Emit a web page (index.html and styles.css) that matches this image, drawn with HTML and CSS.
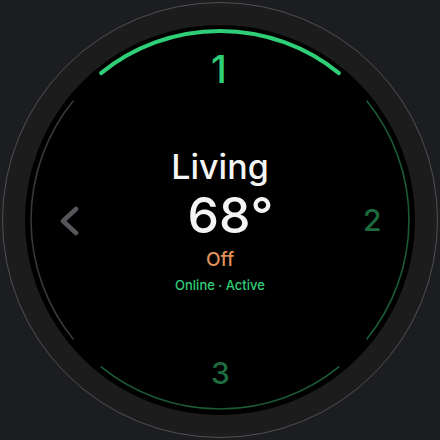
FILE: index.html
```html
<!DOCTYPE html>
<html>
<head>
<meta charset="utf-8">
<link rel="stylesheet" href="styles.css">
</head>
<body>
<div class="stage">
  <div class="bezel">
    <div class="face">
      <svg class="arcs" viewBox="0 0 440 440" width="440" height="440">
        <path class="arc arc-active" d="M101.1 73.1 A189 189 0 0 1 338.9 73.1"/>
        <path class="arc arc-green" d="M366.9 101.1 A189 189 0 0 1 366.9 338.9"/>
        <path class="arc arc-green" d="M338.9 366.9 A189 189 0 0 1 101.1 366.9"/>
        <path class="arc arc-grey" d="M73.1 338.9 A189 189 0 0 1 73.1 101.1"/>
      </svg>
      <span class="num num-1">1</span>
      <span class="num num-2">2</span>
      <span class="num num-3">3</span>
      <svg class="chev" viewBox="0 0 24 34" width="24" height="34">
        <path d="M17 3 L4 15 L17 27"/>
      </svg>
      <div class="info">
        <div class="room">Living</div>
        <div class="temp">68<span class="deg">°</span></div>
        <div class="mode">Off</div>
        <div class="status">Online · Active</div>
      </div>
    </div>
  </div>
</div>
</body>
</html>
```
FILE: styles.css
```css
html, body {
  margin: 0;
  padding: 0;
  background: #1c1d21;
  font-family: Inter, "Noto Sans", sans-serif;
}
.stage {
  width: 440px;
  height: 440px;
  display: flex;
  align-items: center;
  justify-content: center;
}
.bezel {
  width: 434px;
  height: 434px;
  border-radius: 50%;
  border: 1px solid #505052;
  background: #1c1c1d;
  display: flex;
  align-items: center;
  justify-content: center;
}
.face {
  position: relative;
  width: 390px;
  height: 390px;
  border-radius: 50%;
  background: #000;
  display: flex;
  align-items: center;
  justify-content: center;
}
.arcs {
  position: absolute;
  left: -25px;
  top: -25px;
}
.arc {
  fill: none;
  stroke-linecap: round;
}
.arc-active {
  stroke: #2fcf78;
  stroke-width: 4;
}
.arc-green {
  stroke: #1b5a34;
  stroke-width: 1.6;
}
.arc-grey {
  stroke: #38383a;
  stroke-width: 1.6;
}
.num {
  position: absolute;
  line-height: 1;
  font-weight: 500;
}
.num-1 {
  color: #2fcf78;
  font-size: 38px;
  left: 186px;
  top: 25px;
}
.num-2 {
  color: #1e6b3d;
  font-size: 30px;
  left: 338px;
  top: 180px;
}
.num-3 {
  color: #1e6b3d;
  font-size: 30px;
  left: 186px;
  top: 333px;
}
.chev {
  position: absolute;
  left: 34px;
  top: 181px;
}
.chev path {
  fill: none;
  stroke: #56565a;
  stroke-width: 4.5;
  stroke-linecap: round;
  stroke-linejoin: round;
}
.info {
  display: flex;
  flex-direction: column;
  align-items: center;
  margin-top: 0;
}
.room {
  color: #f4f4f4;
  font-size: 34px;
  line-height: 40px;
  font-weight: 500;
}
.temp {
  position: relative;
  color: #f4f4f4;
  font-size: 50px;
  line-height: 56px;
  font-weight: 500;
  margin-left: -2px;
}
.deg {
  position: absolute;
  left: 100%;
  top: 0;
}
.mode {
  color: #e09158;
  font-size: 19px;
  line-height: 24px;
  margin-top: 5px;
  font-weight: 500;
}
.status {
  color: #2fcf78;
  font-size: 13px;
  line-height: 18px;
  margin-top: 4px;
  font-weight: 500;
}
```
